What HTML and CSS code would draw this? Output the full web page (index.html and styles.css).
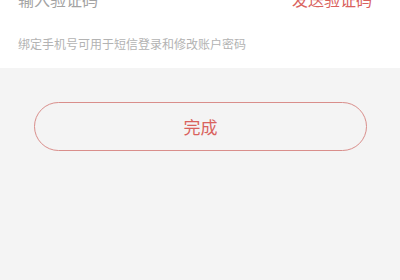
FILE: index.html
```html
<!DOCTYPE html>
<html lang="zh-CN">
<head>
    <meta charset="UTF-8">
    <meta name="viewport" content="width=device-width, initial-scale=1.0">
    <title>绑定手机号</title>
    <link rel="stylesheet" href="styles.css">
</head>
<body>
    <div class="panel">
        <div class="input-row">
            <input class="code-input" type="text" placeholder="输入验证码">
            <span class="send-code">发送验证码</span>
        </div>
        <div class="hint">绑定手机号可用于短信登录和修改账户密码</div>
    </div>

    <button class="done-btn">完成</button>
</body>
</html>
```

FILE: styles.css
```css
* {
    margin: 0;
    padding: 0;
    box-sizing: border-box;
}

body {
    font-family: "Noto Sans CJK SC", "Noto Sans", sans-serif;
    background: #f4f4f4;
    width: 400px;
    height: 280px;
    overflow: hidden;
}

/* White top block */
.panel {
    background: #fff;
}

.input-row {
    display: flex;
    justify-content: space-between;
    align-items: center;
    height: 30px;
    margin-top: -16px;
    padding: 0 28px 0 18px;
}

.code-input {
    border: none;
    outline: none;
    background: transparent;
    font-family: inherit;
    font-size: 16px;
    color: #333;
    width: 180px;
}

.code-input::placeholder {
    color: #a3a3a3;
}

.send-code {
    font-size: 16px;
    color: #d9625d;
}

.hint {
    padding: 22px 18px 16px;
    font-size: 12px;
    line-height: 16px;
    color: #b3b3b3;
}

/* Finish button */
.done-btn {
    display: block;
    width: 333px;
    height: 49px;
    margin: 34px 0 0 34px;
    border: 1.5px solid #d98e8b;
    border-radius: 25px;
    background: transparent;
    font-family: inherit;
    font-size: 17px;
    color: #d9625d;
}
```
